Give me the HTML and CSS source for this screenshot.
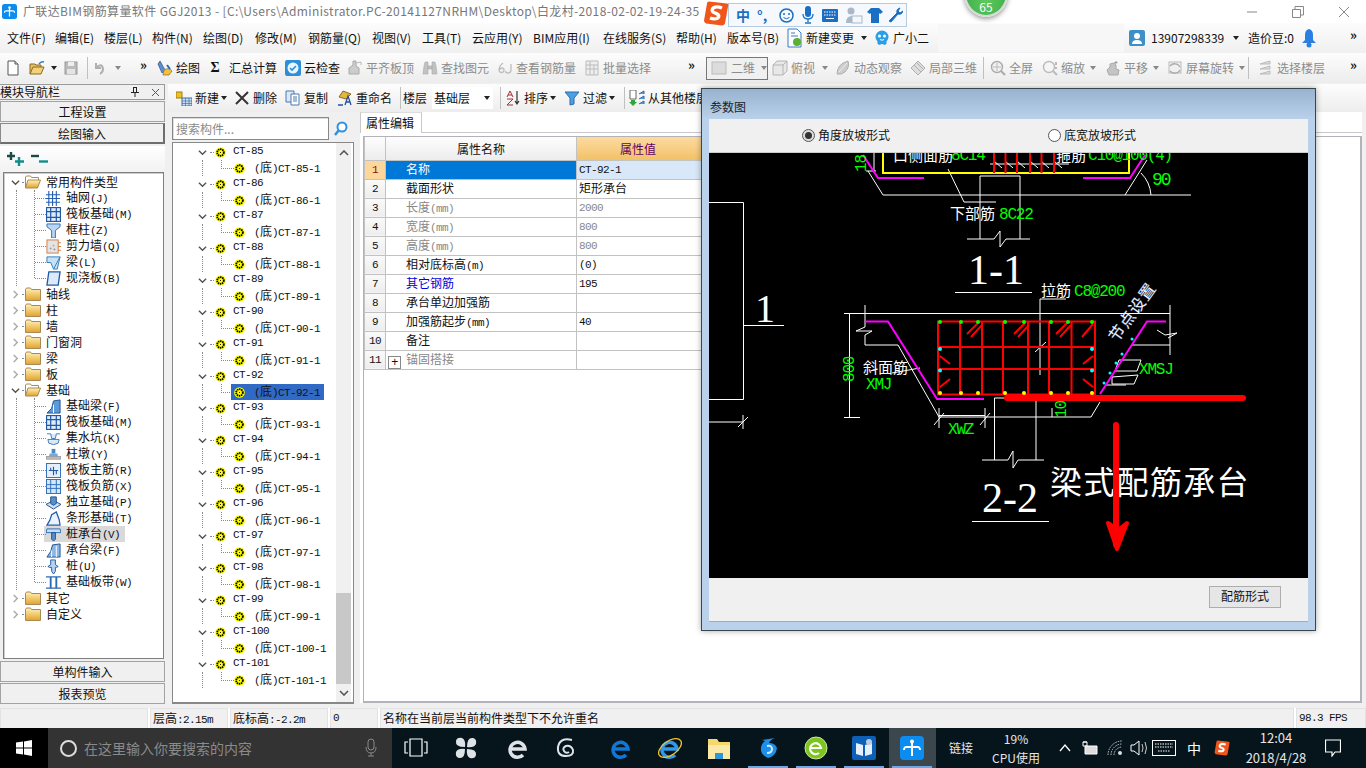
FILE: index.html
```html
<!DOCTYPE html>
<html lang="zh-CN">
<head>
<meta charset="utf-8">
<title>广联达BIM钢筋算量软件 GGJ2013</title>
<link rel="stylesheet" href="styles.css">
</head>
<body>
<svg class="defs" width="0" height="0">
<defs>
<linearGradient id="fy" x1="0" y1="0" x2="0" y2="1"><stop offset="0" stop-color="#fff3b8"/><stop offset="1" stop-color="#e2a12a"/></linearGradient>
<symbol id="folder" viewBox="0 0 16 14"><path d="M.5 2.5 1.5 1h4l1 1.5h9v11H.5z" fill="url(#fy)" stroke="#a88a55"/></symbol>
<symbol id="folderopen" viewBox="0 0 16 14"><path d="M.5 13V2L1.500 1h4l1 1.500h7V5" fill="#fff" stroke="#a88a55"/><path d="M.5 13 3 5h12.500l-3 8z" fill="url(#fy)" stroke="#a88a55"/></symbol>
<symbol id="gear" viewBox="0 0 12 12"><circle cx="6" cy="6" r="5.800" fill="#ff0"/><circle cx="6" cy="6" r="3.600" fill="none" stroke="#000" stroke-width="2" stroke-dasharray="1.600 .7"/><circle cx="6" cy="6" r="1.700" fill="#ff0"/><circle cx="6" cy="6" r=".6" fill="#000"/></symbol>
<symbol id="down" viewBox="0 0 10 6"><path d="M1 1l4 4 4-4" fill="none" stroke="#555" stroke-width="1.600"/></symbol>
<symbol id="right" viewBox="0 0 6 10"><path d="M1 1l4 4-4 4" fill="none" stroke="#aaa" stroke-width="1.600"/></symbol>
<symbol id="t-grid" viewBox="0 0 16 16"><path d="M0 4h15M0 8h15M0 12h15M3 0v16M7 0v16M11 0v16" stroke="#2560b0" stroke-width="1.200" fill="none"/></symbol>
<symbol id="t-raft" viewBox="0 0 16 16"><rect x=".5" y=".5" width="15" height="15" fill="#dfeaf8" stroke="#1f5aa8" stroke-width="1.400"/><path d="M5 1v14M11 1v14M1 5h14M1 11h14" stroke="#1f5aa8" stroke-width="1.300"/></symbol>
<symbol id="t-col" viewBox="0 0 16 16"><path d="M1 1h14v3L10 8v8H6V8L1 4z" fill="#bcd6f2" stroke="#2a6cb8"/></symbol>
<symbol id="t-wall" viewBox="0 0 16 16"><rect x="1" y="1" width="12" height="14" fill="#e4e4e4" stroke="#d27a3c"/><path d="M13 4h3M13 8h3M13 12h3" stroke="#d27a3c"/><circle cx="5" cy="10" r="1" fill="#999"/><circle cx="9" cy="11" r="1" fill="#888"/><circle cx="8" cy="7" r="1" fill="#aaa"/></symbol>
<symbol id="t-beam" viewBox="0 0 16 16"><path d="M1 2h14L12 15H8L5 8H1z" fill="#c8e0f6" stroke="#2a7cc0"/><path d="M8 15l7-13" stroke="#2a7cc0"/></symbol>
<symbol id="t-slab" viewBox="0 0 16 16"><path d="M3 1h12l-2 14H1z" fill="#dbe9fa" stroke="#1f5aa8" stroke-width="1.400"/></symbol>
<symbol id="t-base" viewBox="0 0 16 16"><path d="M1 15l5-5 2-8 7-1v14H1z" fill="#5c9ad8" stroke="#1f4f90"/><path d="M8 15V6" stroke="#fff"/></symbol>
<symbol id="t-sump" viewBox="0 0 16 16"><path d="M1 3h4l1 5h4l1-5h4M3 13q5 3 10 0l1-4H2z" fill="#dce9f5" stroke="#3b78b8"/></symbol>
<symbol id="t-pier" viewBox="0 0 16 16"><rect x="6" y="2" width="4" height="5" fill="#4d8acb"/><path d="M4 7h8l1 3H3z" fill="#7aa6d8"/><rect x="0" y="10" width="16" height="3" fill="#bbb" stroke="#777" stroke-width=".5"/></symbol>
<symbol id="t-mainbar" viewBox="0 0 16 16"><rect x=".5" y=".5" width="15" height="15" fill="#e6eff9" stroke="#2a6cb8"/><path d="M3 8h10M8 4v9M5 5v3M11 8v4" stroke="#1f5aa8" stroke-width="1.200" fill="none"/></symbol>
<symbol id="t-negbar" viewBox="0 0 16 16"><rect x=".5" y=".5" width="15" height="15" fill="#d6e6f7" stroke="#2a6cb8"/><path d="M1 6h14M1 10h14M5 1v14M11 1v14" stroke="#2a6cb8" fill="none"/></symbol>
<symbol id="t-iso" viewBox="0 0 16 16"><path d="M0 10l8-4 8 4-8 5z" fill="#cfe0f4" stroke="#1f4f90"/><path d="M5 2h6v7l-3 2-3-2z" fill="#5a8fca" stroke="#1f4f90"/></symbol>
<symbol id="t-strip" viewBox="0 0 16 16"><path d="M1 15l3-5 2-6 5-3 3 8 1 6z" fill="#eaf2fb" stroke="#1f5aa8" stroke-width="1.300"/></symbol>
<symbol id="t-cap" viewBox="0 0 16 16"><path d="M1 2h14l1 4H0z" fill="#c8dcf2" stroke="#2a6cb8"/><path d="M6 6h4v7l-2 2-2-2z" fill="#5a8fca" stroke="#1f4f90"/></symbol>
<symbol id="t-capbeam" viewBox="0 0 16 16"><path d="M1 15l4-6 2-7 8-1v14z" fill="#8ab6e4" stroke="#1f4f90"/><path d="M6 15V8M11 15V3" stroke="#fff"/></symbol>
<symbol id="t-pile" viewBox="0 0 16 16"><path d="M5 1h5v5l3 2-2 1h-1v4l-2 3-2-3V9H4L2 8l3-2z" fill="#b7d3f0" stroke="#1f5aa8"/></symbol>
<symbol id="t-band" viewBox="0 0 16 16"><path d="M0 2h16M0 14h16" stroke="#2a6cb8" stroke-width="1.500"/><path d="M5 2v12M11 2v12" stroke="#2a6cb8" stroke-width="2"/></symbol>

<symbol id="i-doc" viewBox="0 0 16 16"><path d="M3 1h7l3 3v11H3z" fill="#fff" stroke="#555"/><path d="M10 1v3h3" fill="#ddd" stroke="#555"/></symbol>
<symbol id="i-open" viewBox="0 0 16 16"><path d="M1 14V4h5l1 1h5v2" fill="#e8c064" stroke="#8a6a20"/><path d="M1 14l3-7h11l-3 7z" fill="#f4d078" stroke="#8a6a20"/><path d="M10 4q2-3 5-2" fill="none" stroke="#3a7ac8" stroke-width="1.500"/></symbol>
<symbol id="i-save" viewBox="0 0 16 16"><rect x="2" y="2" width="12" height="12" fill="#bbb" stroke="#999"/><rect x="5" y="2" width="6" height="4" fill="#eee"/><rect x="4" y="9" width="8" height="5" fill="#e4e4e4"/></symbol>
<symbol id="i-undo" viewBox="0 0 16 16"><path d="M5 3v5h5M5 8q6-6 7 1 0 3-3 5" fill="none" stroke="#b0b0b0" stroke-width="2"/></symbol>
<symbol id="i-draw" viewBox="0 0 16 16"><path d="M3 1l5 9-3 3-4-9z" fill="#5f8fd0" stroke="#2a4f8a" stroke-width=".7"/><path d="M7 10q5-3 8 1l-3 4H6z" fill="#f0c040" stroke="#8a6a20" stroke-width=".7"/><path d="M10 5l3 4" stroke="#2a6cb8" stroke-width="2"/></symbol>
<symbol id="i-cloud" viewBox="0 0 16 16"><rect x="0" y="0" width="16" height="16" rx="2" fill="#2e8fd8"/><circle cx="8" cy="8" r="5.500" fill="#eaf6ff"/><path d="M5 8l2 2 4-4" fill="none" stroke="#2e8fd8" stroke-width="1.600"/></symbol>
<symbol id="i-level" viewBox="0 0 16 16"><path d="M2 14V8l4-3V1h3v5l3 2v6z" fill="#ccc" stroke="#aaa"/><path d="M9 3l5-1v3" fill="none" stroke="#bbb"/></symbol>
<symbol id="i-find" viewBox="0 0 16 16"><path d="M2 6l1-4h3v12H1zM10 2h3l1 4 1 8h-5zM6 6h4v3H6z" fill="#c2c2c2" stroke="#aaa" stroke-width=".6"/></symbol>
<symbol id="i-loop" viewBox="0 0 16 16"><path d="M6 3Q2 6 2 10a2.500 2.500 0 0 0 5 0 2 2 0 0 0-4 0M14 4v6q0 3-3 3t-2-2" fill="none" stroke="#bdbdbd" stroke-width="1.300"/></symbol>
<symbol id="i-batch" viewBox="0 0 16 16"><path d="M2 1h12v14H2zM2 5h12M2 9h12M6 1v14M10 5v10" fill="#eee" stroke="#bbb"/></symbol>
<symbol id="i-flat" viewBox="0 0 16 16"><rect x="1" y="2" width="14" height="12" fill="#dcdcdc" stroke="#bbb"/></symbol>
<symbol id="i-cube" viewBox="0 0 16 16"><path d="M1 5l4-4h10v10l-4 4H1zM1 5h10v10M11 5l4-4" fill="#e8e8e8" stroke="#b4b4b4"/></symbol>
<symbol id="i-orbit" viewBox="0 0 16 16"><path d="M2 14Q2 4 13 1q2 6-3 11-4 3-8 2z" fill="#ccc" stroke="#b0b0b0"/><path d="M4 12l8-9" stroke="#eee"/></symbol>
<symbol id="i-local" viewBox="0 0 16 16"><path d="M1 8l7-7 7 7-7 7z" fill="#ddd" stroke="#b0b0b0"/><path d="M4 5l7 7M8 1l-4 4M7 3l6 6" stroke="#b0b0b0" fill="none"/></symbol>
<symbol id="i-full" viewBox="0 0 16 16"><circle cx="7" cy="7" r="5.500" fill="#f0f0f0" stroke="#aaa" stroke-width="1.400"/><path d="M11 11l4 4" stroke="#aaa" stroke-width="2"/><path d="M7 3v8M3 7h8" stroke="#bbb"/></symbol>
<symbol id="i-zoom" viewBox="0 0 16 16"><circle cx="7" cy="7" r="5.500" fill="#f5f5f5" stroke="#bbb" stroke-width="1.400"/><path d="M11 11l4 4M14 2v3M14 7v2" stroke="#bbb" stroke-width="2"/></symbol>
<symbol id="i-pan" viewBox="0 0 16 16"><path d="M4 15l-2-5 3-3V4l4-1 2 2v4l3 1-1 5z" fill="#c4c4c4" stroke="#aaa"/><path d="M11 1v3M9.500 2.500h3" stroke="#999"/></symbol>
<symbol id="i-rot" viewBox="0 0 16 16"><rect x="2" y="2" width="12" height="11" fill="#f0f0f0" stroke="#bbb"/><path d="M3 6a6 6 0 0 1 10 1M13 10a6 6 0 0 1-10 1" fill="none" stroke="#aaa" stroke-width="1.300"/></symbol>
<symbol id="i-floors" viewBox="0 0 16 16"><path d="M2 4l10-3v3zM2 9l10-3v3zM2 14l10-3v3z" fill="#ddd" stroke="#bbb"/></symbol>

<symbol id="s-new" viewBox="0 0 16 16"><rect x="0" y="2" width="6" height="6" fill="#f0c020" stroke="#a07a10"/><rect x="6" y="8" width="10" height="8" fill="#cfe0f4" stroke="#3a6ea8"/><path d="M6 11h10M6 13.500h10M9.500 8v8M13 8v8" stroke="#3a6ea8" stroke-width=".7"/></symbol>
<symbol id="s-del" viewBox="0 0 16 16"><path d="M2 2l12 12M14 2L2 14" stroke="#333" stroke-width="2"/></symbol>
<symbol id="s-copy" viewBox="0 0 16 16"><path d="M1 1h8v11H1z" fill="#dbe8f6" stroke="#4a78b0"/><path d="M6 4h8v11H6z" fill="#fff" stroke="#4a78b0"/><path d="M8 7h4M8 9h4M8 11h4" stroke="#4a78b0"/></symbol>
<symbol id="s-ren" viewBox="0 0 16 16"><path d="M6 1l8 3-5 5-7-2z" fill="#e2b640" stroke="#8a6a20"/><path d="M1 15h5M8 15l3-9 3 9M9 12h4" fill="none" stroke="#2a4f9a" stroke-width="1.300"/></symbol>
<symbol id="s-sort" viewBox="0 0 16 16"><path d="M12 1v13M10 11l2 3 2-3" fill="none" stroke="#333" stroke-width="1.200"/><path d="M2 7l3-6 3 6M3 5h4" fill="none" stroke="#a03030"/><path d="M2 9h6l-6 6h6" fill="none" stroke="#a03030"/></symbol>
<symbol id="s-filter" viewBox="0 0 16 16"><path d="M1 2h14L10 8v6l-4 1V8z" fill="#4aa0e0" stroke="#2a6cb0"/></symbol>
<symbol id="s-from" viewBox="0 0 16 16"><path d="M1 0h6v9H1z" fill="#fff" stroke="#666"/><path d="M2 10h4v2h2l-4 4-4-4h2z" fill="#2ea83a"/><path d="M10 4l5-3v3M10 9l5-3v3M10 14l5-3v3" fill="#5a9ad8" stroke="#2a6cb0"/></symbol>
<symbol id="s-mag" viewBox="0 0 16 16"><circle cx="8" cy="6" r="4.500" fill="#fff" stroke="#2e90e0" stroke-width="2"/><path d="M5 9l-4 5" stroke="#2e90e0" stroke-width="2.500"/></symbol>

<symbol id="m-change" viewBox="0 0 16 20"><path d="M1 1h9l4 4v14H1z" fill="#fff" stroke="#3a7ac8"/><path d="M4 5h4M4 8h7" stroke="#3a7ac8"/><circle cx="10" cy="14" r="4" fill="#5cb030"/></symbol>
<symbol id="m-ai" viewBox="0 0 16 16"><circle cx="8" cy="7" r="6.500" fill="#2a9fe8"/><circle cx="5.500" cy="6" r="1.500" fill="#fff"/><circle cx="10.500" cy="6" r="1.500" fill="#fff"/><path d="M3 13l2-2h6l2 2-2 2-3-1-3 1z" fill="#2a9fe8"/><path d="M6 9.500q2 1.500 4 0" stroke="#fff" fill="none"/></symbol>
<symbol id="m-user" viewBox="0 0 16 16"><rect width="16" height="16" rx="2" fill="#3d8fc8"/><circle cx="8" cy="6" r="3" fill="#fff"/><path d="M3 14q0-4 5-4t5 4z" fill="#fff"/></symbol>
<symbol id="m-bell" viewBox="0 0 16 20"><path d="M8 1q4 1 4 6v5l3 3H1l3-3V7q0-5 4-6z" fill="#2a7fe0"/><circle cx="8" cy="17" r="2.500" fill="#2a7fe0"/></symbol>
<symbol id="app" viewBox="0 0 24 24"><rect width="24" height="24" rx="4" fill="#0d8cf0"/><path d="M12 5v15M4 14c0-4 3-3 4-3h8c1 0 4-1 4 3" fill="none" stroke="#fff" stroke-width="2"/><circle cx="12" cy="5.500" r="2" fill="#fff"/></symbol>
<symbol id="winlogo" viewBox="0 0 16 16"><path d="M0 2.500 7 1.500V7.500H0zM8 1.400 16 0V7.500H8zM0 8.500H7V14.500L0 13.500zM8 8.500H16V16L8 14.600z" fill="#fff"/></symbol>
<symbol id="ie" viewBox="0 0 24 24"><path d="M4 13h15a7.500 7.500 0 1 0-2 6" fill="none" stroke="currentColor" stroke-width="3.500"/></symbol>
<symbol id="sogou" viewBox="0 0 26 26"><path d="M6 1l18 2q2 0 1 3l-3 17q-1 2-3 2L3 23q-2-1-2-3L4 3q0-2 2-2z" fill="#f0561a"/><path d="M19 7.500q-5-2-8-.5-3 2-1 4.500l5 2.500q2 2-1 4-3 1-7-.5" fill="none" stroke="#fff" stroke-width="3.400"/></symbol>
</defs>
</svg>

<div class="app">
  <header class="titlebar">
    <svg class="ic"><use href="#app"/></svg>
    <span class="title-text">广联达BIM钢筋算量软件 GGJ2013 - [C:\Users\Administrator.PC-20141127NRHM\Desktop\白龙村-2018-02-02-19-24-35</span>
    <div class="winbtns">
      <svg width="12" height="12" viewBox="0 0 12 12"><path d="M1 6h10" stroke="#888"/></svg>
      <svg width="12" height="12" viewBox="0 0 12 12"><path d="M.5 3.500h8v8h-8zM3 3V.500h8.500V9H9" fill="none" stroke="#888"/></svg>
      <svg width="12" height="12" viewBox="0 0 12 12"><path d="M1 1l10 10M11 1L1 11" stroke="#888"/></svg>
    </div>
  </header>

  <nav class="menubar">
    <span>文件(F)</span><span>编辑(E)</span><span>楼层(L)</span><span>构件(N)</span><span>绘图(D)</span><span>修改(M)</span><span>钢筋量(Q)</span><span>视图(V)</span><span>工具(T)</span><span>云应用(Y)</span><span>BIM应用(I)</span><span>在线服务(S)</span><span>帮助(H)</span><span>版本号(B)</span>
    <span class="tb"><svg class="ic tall"><use href="#m-change"/></svg>新建变更</span><span class="dd"></span>
    <span class="tb"><svg class="ic"><use href="#m-ai"/></svg>广小二</span>
    <span class="menu-blank"></span><span></span>
    <span class="tb user"><svg class="ic"><use href="#m-user"/></svg>13907298339</span><span class="dd"></span>
    <span>造价豆:0</span>
    <span><svg class="ic tall"><use href="#m-bell"/></svg></span>
    <span class="more">»</span>
  </nav>

  <div class="mainbar">
    <span class="tb"><svg class="ic"><use href="#i-doc"/></svg></span>
    <span class="tb"><svg class="ic"><use href="#i-open"/></svg></span><span class="dd"></span>
    <span class="tb"><svg class="ic"><use href="#i-save"/></svg></span><span class="sep"></span>
    <span class="tb"><svg class="ic"><use href="#i-undo"/></svg></span><span class="dd off"></span>
    <span class="more">»</span>
    <span class="tb"><svg class="ic"><use href="#i-draw"/></svg>绘图</span>
    <span class="tb sigma"><b>Σ</b>汇总计算</span>
    <span class="tb"><svg class="ic"><use href="#i-cloud"/></svg>云检查</span>
    <span class="tb off"><svg class="ic"><use href="#i-level"/></svg>平齐板顶</span>
    <span class="tb off"><svg class="ic"><use href="#i-find"/></svg>查找图元</span>
    <span class="tb off"><svg class="ic"><use href="#i-loop"/></svg>查看钢筋量</span>
    <span class="tb off"><svg class="ic"><use href="#i-batch"/></svg>批量选择</span>
    <span class="more">»</span>
    <span class="combo-2d"><svg class="ic"><use href="#i-flat"/></svg><em>二维</em><i class="dd off"></i></span>
    <span class="tb off"><svg class="ic"><use href="#i-cube"/></svg>俯视</span><span class="dd off"></span>
    <span class="tb off"><svg class="ic"><use href="#i-orbit"/></svg>动态观察</span>
    <span class="tb off"><svg class="ic"><use href="#i-local"/></svg>局部三维</span><span class="sep"></span>
    <span class="tb off"><svg class="ic"><use href="#i-full"/></svg>全屏</span>
    <span class="tb off"><svg class="ic"><use href="#i-zoom"/></svg>缩放</span><span class="dd off"></span>
    <span class="tb off"><svg class="ic"><use href="#i-pan"/></svg>平移</span><span class="dd off"></span>
    <span class="tb off"><svg class="ic"><use href="#i-rot"/></svg>屏幕旋转</span><span class="dd off"></span><span class="sep"></span>
    <span class="tb off"><svg class="ic"><use href="#i-floors"/></svg>选择楼层</span>
    <span class="more">»</span>
  </div>

  <main class="main">
    <aside class="nav">
      <div class="nav-head"><span>模块导航栏</span>
        <svg class="nav-pin" width="8" height="10" viewBox="0 0 8 10"><path d="M2 .5h4M2.500 1v4M5.500 1v4M0 5.500h8M4 6v4" stroke="#222" fill="none"/></svg>
        <svg width="9" height="9" viewBox="0 0 9 9"><path d="M1 1l7 7M8 1L1 8" stroke="#555"/></svg>
      </div>
      <button class="navbtn">工程设置</button>
      <button class="navbtn pressed">绘图输入</button>
      <div class="nav-tools">
        <svg width="17" height="14" viewBox="0 0 17 14"><path d="M4 0v8M0 4h8" stroke="#1a4a44" stroke-width="2.400"/><path d="M12 5v9M8 9.500h9" stroke="#0e8f8a" stroke-width="2.400"/></svg>
        <svg width="17" height="14" viewBox="0 0 17 14"><path d="M0 4h8" stroke="#1a4a44" stroke-width="2.400"/><path d="M8 9.500h9" stroke="#0e8f8a" stroke-width="2.400"/></svg>
      </div>
      <div class="nav-tree m">
        <div class="n-row"><svg class="chev"><use href="#down"/></svg><svg class="fold"><use href="#folderopen"/></svg><i>常用构件类型</i></div>
        <div class="kids"><div class="kidlist">
          <div class="k-row"><svg class="ic"><use href="#t-grid"/></svg><span><i>轴网</i>(J)</span></div>
          <div class="k-row"><svg class="ic"><use href="#t-raft"/></svg><span><i>筏板基础</i>(M)</span></div>
          <div class="k-row"><svg class="ic"><use href="#t-col"/></svg><span><i>框柱</i>(Z)</span></div>
          <div class="k-row"><svg class="ic"><use href="#t-wall"/></svg><span><i>剪力墙</i>(Q)</span></div>
          <div class="k-row"><svg class="ic"><use href="#t-beam"/></svg><span><i>梁</i>(L)</span></div>
          <div class="k-row"><svg class="ic"><use href="#t-slab"/></svg><span><i>现浇板</i>(B)</span></div>
        </div></div>
        <div class="n-row"><svg class="chev"><use href="#right"/></svg><svg class="fold"><use href="#folder"/></svg><i>轴线</i></div>
        <div class="n-row"><svg class="chev"><use href="#right"/></svg><svg class="fold"><use href="#folder"/></svg><i>柱</i></div>
        <div class="n-row"><svg class="chev"><use href="#right"/></svg><svg class="fold"><use href="#folder"/></svg><i>墙</i></div>
        <div class="n-row"><svg class="chev"><use href="#right"/></svg><svg class="fold"><use href="#folder"/></svg><i>门窗洞</i></div>
        <div class="n-row"><svg class="chev"><use href="#right"/></svg><svg class="fold"><use href="#folder"/></svg><i>梁</i></div>
        <div class="n-row"><svg class="chev"><use href="#right"/></svg><svg class="fold"><use href="#folder"/></svg><i>板</i></div>
        <div class="n-row"><svg class="chev"><use href="#down"/></svg><svg class="fold"><use href="#folderopen"/></svg><i>基础</i></div>
        <div class="kids"><div class="kidlist">
          <div class="k-row"><svg class="ic"><use href="#t-base"/></svg><span><i>基础梁</i>(F)</span></div>
          <div class="k-row"><svg class="ic"><use href="#t-raft"/></svg><span><i>筏板基础</i>(M)</span></div>
          <div class="k-row"><svg class="ic"><use href="#t-sump"/></svg><span><i>集水坑</i>(K)</span></div>
          <div class="k-row"><svg class="ic"><use href="#t-pier"/></svg><span><i>柱墩</i>(Y)</span></div>
          <div class="k-row"><svg class="ic"><use href="#t-mainbar"/></svg><span><i>筏板主筋</i>(R)</span></div>
          <div class="k-row"><svg class="ic"><use href="#t-negbar"/></svg><span><i>筏板负筋</i>(X)</span></div>
          <div class="k-row"><svg class="ic"><use href="#t-iso"/></svg><span><i>独立基础</i>(P)</span></div>
          <div class="k-row"><svg class="ic"><use href="#t-strip"/></svg><span><i>条形基础</i>(T)</span></div>
          <div class="k-row active"><svg class="ic"><use href="#t-cap"/></svg><span><i>桩承台</i>(V)</span></div>
          <div class="k-row"><svg class="ic"><use href="#t-capbeam"/></svg><span><i>承台梁</i>(F)</span></div>
          <div class="k-row"><svg class="ic"><use href="#t-pile"/></svg><span><i>桩</i>(U)</span></div>
          <div class="k-row"><svg class="ic"><use href="#t-band"/></svg><span><i>基础板带</i>(W)</span></div>
        </div></div>
        <div class="n-row"><svg class="chev"><use href="#right"/></svg><svg class="fold"><use href="#folder"/></svg><i>其它</i></div>
        <div class="n-row"><svg class="chev"><use href="#right"/></svg><svg class="fold"><use href="#folder"/></svg><i>自定义</i></div>
      </div>
      <button class="navbtn low">单构件输入</button>
      <button class="navbtn">报表预览</button>
    </aside>

    <section class="work">
      <div class="subbar">
        <span class="tb"><svg class="ic"><use href="#s-new"/></svg>新建</span><span class="dd"></span>
        <span class="tb"><svg class="ic"><use href="#s-del"/></svg>删除</span>
        <span class="tb"><svg class="ic"><use href="#s-copy"/></svg>复制</span>
        <span class="tb"><svg class="ic"><use href="#s-ren"/></svg>重命名</span><span class="sep"></span>
        <span class="tb">楼层</span>
        <span class="combo"><em>基础层</em><i class="dd"></i></span><span class="sep"></span>
        <span class="tb"><svg class="ic"><use href="#s-sort"/></svg>排序</span><span class="dd"></span>
        <span class="tb"><svg class="ic"><use href="#s-filter"/></svg>过滤</span><span class="dd"></span><span class="sep"></span>
        <span class="tb"><svg class="ic"><use href="#s-from"/></svg>从其他楼层</span>
      </div>
      <div class="work-body">
        <div class="list">
          <div class="search"><div class="search-box">搜索构件...</div><svg class="ic"><use href="#s-mag"/></svg></div>
          <div class="ct-tree m">
            <div class="ct-rows">
              <div class="g-row"><svg class="chev"><use href="#down"/></svg><svg class="gr"><use href="#gear"/></svg>CT-85</div><div class="c-row"><span class="sel"><svg class="gr"><use href="#gear"/></svg><b>(<i>底</i>)CT-85-1</b></span></div>
              <div class="g-row"><svg class="chev"><use href="#down"/></svg><svg class="gr"><use href="#gear"/></svg>CT-86</div><div class="c-row"><span class="sel"><svg class="gr"><use href="#gear"/></svg><b>(<i>底</i>)CT-86-1</b></span></div>
              <div class="g-row"><svg class="chev"><use href="#down"/></svg><svg class="gr"><use href="#gear"/></svg>CT-87</div><div class="c-row"><span class="sel"><svg class="gr"><use href="#gear"/></svg><b>(<i>底</i>)CT-87-1</b></span></div>
              <div class="g-row"><svg class="chev"><use href="#down"/></svg><svg class="gr"><use href="#gear"/></svg>CT-88</div><div class="c-row"><span class="sel"><svg class="gr"><use href="#gear"/></svg><b>(<i>底</i>)CT-88-1</b></span></div>
              <div class="g-row"><svg class="chev"><use href="#down"/></svg><svg class="gr"><use href="#gear"/></svg>CT-89</div><div class="c-row"><span class="sel"><svg class="gr"><use href="#gear"/></svg><b>(<i>底</i>)CT-89-1</b></span></div>
              <div class="g-row"><svg class="chev"><use href="#down"/></svg><svg class="gr"><use href="#gear"/></svg>CT-90</div><div class="c-row"><span class="sel"><svg class="gr"><use href="#gear"/></svg><b>(<i>底</i>)CT-90-1</b></span></div>
              <div class="g-row"><svg class="chev"><use href="#down"/></svg><svg class="gr"><use href="#gear"/></svg>CT-91</div><div class="c-row"><span class="sel"><svg class="gr"><use href="#gear"/></svg><b>(<i>底</i>)CT-91-1</b></span></div>
              <div class="g-row"><svg class="chev"><use href="#down"/></svg><svg class="gr"><use href="#gear"/></svg>CT-92</div><div class="c-row on"><span class="sel"><svg class="gr"><use href="#gear"/></svg><b>(<i>底</i>)CT-92-1</b></span></div>
              <div class="g-row"><svg class="chev"><use href="#down"/></svg><svg class="gr"><use href="#gear"/></svg>CT-93</div><div class="c-row"><span class="sel"><svg class="gr"><use href="#gear"/></svg><b>(<i>底</i>)CT-93-1</b></span></div>
              <div class="g-row"><svg class="chev"><use href="#down"/></svg><svg class="gr"><use href="#gear"/></svg>CT-94</div><div class="c-row"><span class="sel"><svg class="gr"><use href="#gear"/></svg><b>(<i>底</i>)CT-94-1</b></span></div>
              <div class="g-row"><svg class="chev"><use href="#down"/></svg><svg class="gr"><use href="#gear"/></svg>CT-95</div><div class="c-row"><span class="sel"><svg class="gr"><use href="#gear"/></svg><b>(<i>底</i>)CT-95-1</b></span></div>
              <div class="g-row"><svg class="chev"><use href="#down"/></svg><svg class="gr"><use href="#gear"/></svg>CT-96</div><div class="c-row"><span class="sel"><svg class="gr"><use href="#gear"/></svg><b>(<i>底</i>)CT-96-1</b></span></div>
              <div class="g-row"><svg class="chev"><use href="#down"/></svg><svg class="gr"><use href="#gear"/></svg>CT-97</div><div class="c-row"><span class="sel"><svg class="gr"><use href="#gear"/></svg><b>(<i>底</i>)CT-97-1</b></span></div>
              <div class="g-row"><svg class="chev"><use href="#down"/></svg><svg class="gr"><use href="#gear"/></svg>CT-98</div><div class="c-row"><span class="sel"><svg class="gr"><use href="#gear"/></svg><b>(<i>底</i>)CT-98-1</b></span></div>
              <div class="g-row"><svg class="chev"><use href="#down"/></svg><svg class="gr"><use href="#gear"/></svg>CT-99</div><div class="c-row"><span class="sel"><svg class="gr"><use href="#gear"/></svg><b>(<i>底</i>)CT-99-1</b></span></div>
              <div class="g-row"><svg class="chev"><use href="#down"/></svg><svg class="gr"><use href="#gear"/></svg>CT-100</div><div class="c-row"><span class="sel"><svg class="gr"><use href="#gear"/></svg><b>(<i>底</i>)CT-100-1</b></span></div>
              <div class="g-row"><svg class="chev"><use href="#down"/></svg><svg class="gr"><use href="#gear"/></svg>CT-101</div><div class="c-row"><span class="sel"><svg class="gr"><use href="#gear"/></svg><b>(<i>底</i>)CT-101-1</b></span></div>
            </div>
            <div class="vscroll">
              <svg width="10" height="6" viewBox="0 0 10 6"><path d="M1 5l4-4 4 4" fill="none" stroke="#555" stroke-width="1.600"/></svg>
              <div class="thumb"></div>
              <svg width="10" height="6" viewBox="0 0 10 6"><use href="#down"/></svg>
            </div>
          </div>
        </div>
        <div class="props">
          <div class="tabs"><span class="tab">属性编辑</span></div>
          <div class="grid-wrap">
            <table class="attrs m">
              <colgroup><col class="c-n"><col class="c-name"><col></colgroup>
              <thead><tr><th></th><th>属性名称</th><th class="vh">属性值</th></tr></thead>
              <tbody>
                <tr class="cur"><td class="no">1</td><td class="nm"><i>名称</i></td><td class="val">CT-92-1</td></tr>
                <tr><td class="no">2</td><td class="nm"><i>截面形状</i></td><td class="val"><i>矩形承台</i></td></tr>
                <tr class="dis"><td class="no">3</td><td class="nm"><i>长度</i>(mm)</td><td class="val">2000</td></tr>
                <tr class="dis"><td class="no">4</td><td class="nm"><i>宽度</i>(mm)</td><td class="val">800</td></tr>
                <tr class="dis"><td class="no">5</td><td class="nm"><i>高度</i>(mm)</td><td class="val">800</td></tr>
                <tr><td class="no">6</td><td class="nm"><i>相对底标高</i>(m)</td><td class="val">(0)</td></tr>
                <tr><td class="no">7</td><td class="nm link"><i>其它钢筋</i></td><td class="val">195</td></tr>
                <tr><td class="no">8</td><td class="nm"><i>承台单边加强筋</i></td><td class="val"></td></tr>
                <tr><td class="no">9</td><td class="nm"><i>加强筋起步</i>(mm)</td><td class="val">40</td></tr>
                <tr><td class="no">10</td><td class="nm"><i>备注</i></td><td class="val"></td></tr>
                <tr><td class="no">11</td><td class="nm grey"><span class="plus">+</span><i>锚固搭接</i></td><td class="val"></td></tr>
              </tbody>
            </table>
          </div>
        </div>
      </div>
    </section>
  </main>

  <footer class="status m">
    <span></span><span><i>层高</i>:2.15m</span><span><i>底标高</i>:-2.2m</span><span>0</span><span class="msg"><i>名称在当前层当前构件类型下不允许重名</i></span><span>98.3 FPS</span>
  </footer>

  <div class="taskbar">
    <div class="start"><svg width="16" height="16"><use href="#winlogo"/></svg></div>
    <div class="tsearch">
      <span class="cortana"></span><span class="tsearch-text">在这里输入你要搜索的内容</span>
      <svg class="mic" width="12" height="20" viewBox="0 0 12 20"><rect x="3" y="1" width="6" height="11" rx="3" fill="none" stroke="#8a8a8a"/><path d="M1 9q0 6 5 6t5-6M6 15v3M3 18h6" fill="none" stroke="#8a8a8a"/></svg>
    </div>
    <div class="tasks">
      <span class="tc"><svg width="24" height="24" viewBox="0 0 24 24"><path d="M6 3h12v17H6zM4 6H1v11h3M20 6h3v11h-3" fill="none" stroke="#fff" stroke-width="1.200"/></svg></span>
      <span class="tc"><svg width="24" height="24" viewBox="0 0 24 24"><path d="M11 11Q1 11 2 5q1-4 6-3 4 2 3 9zM13 11q0-10 6-9 4 1 3 6-2 4-9 3zM13 13q10 0 9 6-1 4-6 3-4-2-3-9zM11 13q0 10-6 9-4-1-3-6 2-4 9-3z" fill="#dde3e6"/></svg></span>
      <span class="tc ce"><svg width="24" height="24"><use href="#ie"/></svg></span>
      <span class="tc"><svg width="24" height="24" viewBox="0 0 24 24"><path d="M18 4Q6 1 4 11q-1 9 8 9 8 0 7-6-2-5-7-4-4 2-2 5t5 1" fill="none" stroke="#dde3e6" stroke-width="2"/></svg></span>
      <span class="tc edge"><svg width="24" height="24"><use href="#ie"/></svg></span>
      <span class="tc ie"><svg width="24" height="24"><use href="#ie"/><ellipse cx="12" cy="12" rx="13" ry="7" transform="rotate(-35 12 12)" fill="none" stroke="#f2c530" stroke-width="1.300"/></svg></span>
      <span class="tc"><svg width="24" height="24" viewBox="0 0 24 24"><path d="M1 3h9l2 3h11v17H1z" fill="#f5d76e"/><path d="M1 9h22v14H1z" fill="#fbe9a7"/><path d="M8 23v-6h8v6z" fill="#2f97d8"/></svg></span>
      <span class="tc run"><svg width="24" height="24" viewBox="0 0 24 24"><path d="M6 4l13-2q-5 2-6 5 6 0 8 5-1 8-9 10-8-3-7-11 1-4 4-6z" fill="#1e8fe8"/><path d="M11 10q5-1 5 3t-5 4" fill="none" stroke="#cfe9ff" stroke-width="2"/></svg></span>
      <span class="tc run"><svg width="24" height="24" viewBox="0 0 24 24"><circle cx="12" cy="12" r="11" fill="#7cc520" stroke="#cde9a0"/><path d="M6 12h11a5.500 5.500 0 1 0-2 5" fill="none" stroke="#fff" stroke-width="2.200"/></svg></span>
      <span class="tc run"><svg width="24" height="24" viewBox="0 0 24 24"><rect width="24" height="24" rx="2" fill="#0c60b8"/><path d="M4 7l7 2v11l-7-2zM20 7l-7 2v11l7-2z" fill="#e6f0fa"/><circle cx="17" cy="6" r="3" fill="#bcd" /></svg></span>
      <span class="tc run cur-app"><svg width="24" height="24"><use href="#app"/></svg></span>
      <span class="tray-text">链接</span>
      <span class="tray-cpu"><span>19%</span><span>CPU使用</span></span>
      <span class="tc"><svg width="12" height="8" viewBox="0 0 12 8"><path d="M1 7l5-6 5 6" fill="none" stroke="#fff" stroke-width="1.300"/></svg></span>
      <span class="tc"><svg width="16" height="14" viewBox="0 0 16 14"><path d="M3 5h12v8H3z" fill="#ddd" stroke="#fff"/><path d="M1 1h4v4H1zM2 0v2M4 0v2" stroke="#fff" fill="none"/></svg></span>
      <span class="tc"><svg width="16" height="16" viewBox="0 0 16 16"><path d="M1 15A14 14 0 0 1 15 1M4 15A11 11 0 0 1 15 4M7 15a8 8 0 0 1 8-8" fill="none" stroke="#ccc" stroke-dasharray="1.500 1"/><circle cx="13" cy="13" r="2" fill="#ddd"/></svg></span>
      <span class="tc"><svg width="18" height="16" viewBox="0 0 18 16"><path d="M1 5h3l5-4v14l-5-4H1z" fill="none" stroke="#fff"/><path d="M12 4q2 4 0 8M15 2q3 6 0 12" fill="none" stroke="#ccc"/></svg></span>
      <span class="tc"><svg width="24" height="16" viewBox="0 0 24 16"><rect x=".5" y=".5" width="23" height="15" fill="none" stroke="#fff"/><path d="M3 4h18M3 7h18M6 11h12" stroke="#fff" stroke-dasharray="1.500 1"/></svg></span>
      <span class="tray-text zh">中</span>
      <span class="tc"><svg width="16" height="18"><use href="#sogou"/></svg></span>
      <span class="clock"><span>12:04</span><span>2018/4/28</span></span>
      <span class="tc"><svg width="16" height="18" viewBox="0 0 16 18"><path d="M.5 1h15v12H10l-3 4v-4H.5z" fill="none" stroke="#fff" stroke-width="1.200"/></svg></span>
    </div>
  </div>

  <div class="ball"><span>65</span></div>
  <div class="ime">
    <svg class="ime-logo" width="26" height="27"><use href="#sogou"/></svg>
    <div class="ime-bar">
      <b>中</b><b>°,</b>
      <svg width="15" height="15" viewBox="0 0 15 15"><circle cx="7.500" cy="7.500" r="6.500" fill="none" stroke="#1a6fc4" stroke-width="1.500"/><circle cx="5" cy="6" r="1" fill="#1a6fc4"/><circle cx="10" cy="6" r="1" fill="#1a6fc4"/><path d="M4.500 9.500q3 2.500 6 0" fill="none" stroke="#1a6fc4"/></svg>
      <svg width="12" height="18" viewBox="0 0 12 18"><rect x="3" y="0" width="6" height="11" rx="3" fill="#1a6fc4"/><path d="M1 8q0 5 5 5t5-5M6 13v3M3 17h6" fill="none" stroke="#1a6fc4" stroke-width="1.300"/></svg>
      <svg width="16" height="13" viewBox="0 0 16 13"><rect width="16" height="13" rx="1" fill="#1a6fc4"/><path d="M2 3h12M2 6h12" stroke="#fff" stroke-dasharray="1.500 1"/><path d="M4 9.500h8" stroke="#fff"/></svg>
      <svg width="18" height="17" viewBox="0 0 18 17"><circle cx="6" cy="4" r="3.500" fill="#a8b8c8"/><path d="M1 16q0-7 6-7l2 7z" fill="#a8b8c8"/><rect x="7" y="9" width="10" height="7" fill="#f3f6fa" stroke="#a8b8c8"/></svg>
      <svg width="16" height="15" viewBox="0 0 16 15"><path d="M4 0h8l4 4-3 2-1-1v10H4V5L3 6 0 4z" fill="#1a6fc4"/></svg>
      <svg width="15" height="16" viewBox="0 0 15 16"><path d="M1 14L9 6q-1-4 3-5l-2 3 2 2 3-2q-1 4-5 3l-7 8z" fill="#1a6fc4" stroke="#1a6fc4"/></svg>
    </div>
  </div>

  <div class="dialog">
    <div class="dlg-title">参数图</div>
    <div class="dlg-radios">
      <label class="rad"><span class="dot on"></span>角度放坡形式</label>
      <label class="rad"><span class="dot"></span>底宽放坡形式</label>
    </div>
    <svg class="cad" width="599" height="425" viewBox="709 153 599 425">
      <rect x="709" y="153" width="599" height="425" fill="#000"/>
      <g class="w">
        <path d="M709 202.500h34.500v197H709M709 422h34M738 427l10-10M743 415v14"/>
        <path d="M868 171l15 24h308M1125 195l22-35M874 153v18M866 171h10M1141 173q9 9 10 22"/>
        <path d="M990 164h79M994 161l8 7M1005 161l8 7M1017 161l8 7M1030 161l8 7M1041 161l8 7M1054 161l8 7"/>
        <path d="M980 239v-63h40v63M967 239h27l6-8v16l6-8h24"/>
        <path d="M948 169l16 33h32"/>
        <path d="M955 292.500h77M744 325.500h40M972 521.500h77"/>
        <path d="M1040 375V299h26M1035 352l11-10M865 305v22M1170 305v50M844 313.500h326M849.500 313v104M844 417.500h16"/>
        <path d="M865 327l-9 4 16 0-7 4v10h33l41 72h152l9-15M892 373l28-5"/>
        <path d="M1157 330l8 5 12-2-9 5M1132 345l38 0"/>
        <path d="M1119 360h22l-4 11h-22zM1112 377l26-2-4 9h-22zM1106 385h20"/>
        <path d="M939 415.500h46M939 408v20M985 408v20M934 425l10-12M980 425l10-12"/>
        <path d="M994.500 460V398h41.500v62M982 460h26l5-9v17l5-8h26M1052 408v9"/>
      </g>
      <g class="mg">
        <path d="M863 155l15 23h46M1083 178h47l15-23"/>
        <path d="M866 321.500h22l49 77.500h47M1100 394l47-72.500h19"/>
      </g>
      <path class="yl" d="M883 153v20h246v-20"/>
      <g class="rd">
        <path d="M994 153v20M1005.500 153v20M1017 153v20M1030 153v20M1041.500 153v20M1054 153v20"/>
        <path d="M938 321.500h157v73H938zM960 321v74M982 321v74M1003 321v74M1028 321v74M1049 321v74M1071.500 321v74M938 347h157M938 369h157"/>
        <path d="M967 334l11-11M971 337l11-12M1014 334l11-11M1018 337l11-12M1056 334l11-11M1060 337l11-12M1082 337l11-13"/>
        <path d="M940 356l10 8M950 379l-10 8M1093 356l-10 8M1083 379l10 8"/>
      </g>
      <g class="gn-d"><circle cx="940" cy="322" r="2"/><circle cx="961" cy="322" r="2"/><circle cx="978" cy="322" r="2"/><circle cx="1005" cy="322" r="2"/><circle cx="1024" cy="322" r="2"/><circle cx="1051" cy="322" r="2"/><circle cx="1068" cy="322" r="2"/><circle cx="1092" cy="322" r="2"/></g>
      <g class="yl-d"><circle cx="940" cy="393" r="2"/><circle cx="961" cy="393" r="2"/><circle cx="978" cy="393" r="2"/><circle cx="1005" cy="393" r="2"/><circle cx="1024" cy="393" r="2"/><circle cx="1051" cy="393" r="2"/><circle cx="1068" cy="393" r="2"/><circle cx="1092" cy="393" r="2"/></g>
      <g class="cy-d"><circle cx="940" cy="349" r="2"/><circle cx="1092" cy="349" r="2"/><circle cx="940" cy="370.500" r="2"/><circle cx="1092" cy="370.500" r="2"/><circle cx="1122" cy="354" r="1.500"/><circle cx="1116" cy="363" r="1.500"/><circle cx="1110" cy="373" r="1.500"/><circle cx="1104" cy="383" r="1.500"/><circle cx="1132" cy="339" r="1.500"/></g>
      <text class="tw" x="893" y="161">口侧面筋</text><text class="tg" x="951" y="160">8C14</text>
      <text class="tw" x="1056" y="161">箍筋</text><text class="tg" x="1088" y="160">C10@100(4)</text>
      <text class="tg g2" x="1152" y="185">90</text>
      <text class="tg" transform="translate(866 172) rotate(-90)">18</text>
      <text class="tw" x="950" y="219">下部筋</text><text class="tg" x="999" y="219">8C22</text>
      <text class="ts" x="968" y="284">1-1</text>
      <text class="ts s1" x="755" y="322">1</text>
      <text class="tw" x="1041" y="296">拉筋</text><text class="tg" x="1074" y="296">C8@200</text>
      <text class="tw tilt" transform="translate(1117 343) rotate(-54)">节点设置</text>
      <text class="tg" transform="translate(854 382) rotate(-90)">800</text>
      <text class="tw" x="863" y="373">斜面筋</text>
      <text class="tg n" x="866" y="389">XMJ</text>
      <text class="tg n" x="1139" y="374">XMSJ</text>
      <text class="tg n" x="948" y="434">XWZ</text>
      <text class="tg" transform="translate(1066 418) rotate(-90)">10</text>
      <text class="ts" x="982" y="512">2-2</text>
      <text class="big" x="1050" y="494">梁式配筋承台</text>
      <path class="mark" d="M1007 398h236"/>
      <path class="mark" d="M1116 425v120"/>
      <path class="mark-h" d="M1108 523l9 26 10-26-9 7z"/>
    </svg>
    <div class="dlg-foot"><button class="dlg-btn">配筋形式</button></div>
  </div>
</div>
</body>
</html>
```
FILE: styles.css
```css
*{box-sizing:border-box}
html,body{margin:0;padding:0;height:768px;overflow:hidden}
body{font:12px/1.2 "Noto Sans CJK SC","Liberation Sans",sans-serif;color:#111;background:#f0f0f0}
.defs{position:absolute}
.app{position:relative;width:1366px;height:768px;display:flex;flex-direction:column;overflow:hidden}
i,em{font-style:normal}
.ic{width:16px;height:16px;flex:none;display:block}
.ic.tall{height:20px}
button{font:inherit;color:inherit;padding:0;margin:0}

/* mono body with 12px CJK inside */
.m{font-family:"Liberation Mono","Noto Sans CJK SC",monospace;font-size:11px;letter-spacing:-.6px}
.m i{font-family:"Noto Sans CJK SC",sans-serif;font-size:12px;letter-spacing:0}

.titlebar{height:23px;flex:none;background:#fff;display:flex;align-items:center;padding-left:2px;color:#777}
.titlebar .ic{width:15px;height:15px;margin-right:6px}
.title-text{white-space:nowrap;letter-spacing:.37px}
.winbtns{margin-left:auto;display:grid;grid-template-columns:46px 46px 30px;width:122px;margin-right:-2px}

.menubar,.mainbar,.subbar{display:grid;align-items:center;white-space:nowrap}
.tb{display:flex;align-items:center;gap:3px;white-space:nowrap}
.dd{display:flex;align-items:center;padding-left:2px;height:100%}
.dd::before{content:"";border:3px solid transparent;border-top:4px solid #222;border-bottom:0}
.dd.off::before{border-top-color:#888}
.sep{width:1px;height:22px;background:#c0c0c0;margin-left:2px}
.more{font-weight:700;font-size:13px;line-height:1;margin-top:-8px}
.off{color:#8c8c8c}

.menubar{height:30px;flex:none;padding-left:7px;background:linear-gradient(#fcfcfc,#f0f0f0);
grid-template-columns:48px 49px 48px 51px 52px 53px 64px 50px 50px 61px 70px 73px 51px 60px 72px 15px 64px 186px 5px 102px 17px 53px 49px 16px}
.menubar .tb:first-of-type .ic{margin-right:1px}
.menu-blank{height:28px;background:#f7f7f7}
.user{gap:6px}

.mainbar{height:30px;flex:none;padding-left:5px;background:linear-gradient(#fdfdfd,#ececec);
grid-template-columns:24px 20px 14px 22px 6px 22px 27px 17px 50px 78px 62px 75px 75px 87px 104px 18px 66px 48px 15px 75px 71px 9px 52px 46px 17px 46px 16px 70px 9px 12px 92px 16px}
.sigma{gap:6px}
.sigma b{font:700 14px "Liberation Serif",serif;width:16px;text-align:center}
.combo-2d{display:flex;align-items:center;gap:4px;width:62px;height:23px;border:1px solid #777;background:#f0f0f0;padding-left:4px;color:#8c8c8c}
.combo-2d .dd{margin-left:auto;padding-right:3px;width:auto}

.main{flex:1;display:flex;padding-top:1px;min-height:0}
.nav{width:166px;flex:none;display:flex;flex-direction:column;padding-right:1px}
.nav-head{height:16px;display:flex;align-items:center;background:#f0f0f0;border:1px solid #999;border-left:0;padding-right:4px;color:#111}
.nav-pin{margin-left:auto;margin-right:12px}
.navbtn{height:21px;flex:none;background:#f0f0f0;border:1px solid #a3a3a3;margin-top:1px;text-align:center;line-height:19px}
.navbtn.pressed{border-color:#8a8a8a #6e6e6e #6e6e6e #8a8a8a;border-width:1px 2px 2px 1px}
.nav-tools{height:26px;flex:none;margin-top:2px;background:linear-gradient(#fff,#f2f2f2);display:flex;align-items:center;gap:7px;padding-left:7px}
.nav-tree{margin-left:3px;margin-right:1px;height:487px;flex:none;background:#fff;border:1px solid #7f7f7f;box-shadow:inset 1px 1px 0 #ccc;padding-top:1px}
.low{margin-top:2px}
.n-row{height:16px;display:flex;align-items:center;position:relative;padding-left:7px}
.chev{width:9px;height:9px;flex:none;margin-right:6px}
.n-row .chev{margin-right:5px}
.fold{width:16px;height:14px;flex:none;margin-right:5px}
.n-row::after{content:"";position:absolute;left:18px;top:8px;width:4px;border-top:1px dotted #888}
.kids{margin-left:12px;border-left:1px dotted #888}
.kidlist{margin-left:17px;border-left:1px dotted #888}
.k-row{height:16px;display:flex;align-items:center;position:relative;padding-left:11px;gap:5px;white-space:nowrap}
.k-row::before{content:"";width:11px;border-top:1px dotted #888;position:absolute;left:0;top:8px}
.k-row .ic{width:15px;height:15px;position:relative}
.k-row.active{background:linear-gradient(90deg,transparent 9px,#d9d9d9 9px,#d9d9d9 90px,transparent 90px)}
.kidlist .k-row:last-child::after{content:"";position:absolute;left:-1px;top:9px;width:1px;height:8px;background:#fff}

.work{flex:1;min-width:0;display:flex;flex-direction:column}
.subbar{height:28px;flex:none;margin-left:2px;padding-left:8px;background:linear-gradient(#fdfdfd,#ededed);
grid-template-columns:43px 15px 51px 52px 61px 5px 29px 66px 7px 43px 16px 43px 15px 7px 200px}
.combo{display:flex;align-items:center;width:61px;height:22px;background:#fff;padding-left:2px}
.combo .dd{margin-left:auto;padding-right:3px;width:auto}
.work-body{flex:1;display:flex;min-height:0;background:#f0f0f0}
.list{width:194px;flex:none;display:flex;flex-direction:column;padding:5px 0 4px 6px}
.search{display:flex;align-items:center;height:23px;flex:none;gap:5px}
.search-box{width:157px;height:23px;border:1px solid #888;background:#fff;color:#8a8a8a;padding-left:3px;line-height:21px;font-size:12px;box-shadow:inset 1px 1px 0 #ddd}
.ct-tree{margin-top:2px;width:182px;flex:1;background:#fff;border:1px solid #888;border-bottom:2px solid #888;display:flex;min-height:0}
.ct-rows{flex:1;min-width:0;padding-top:1px}
.g-row{height:16px;display:flex;align-items:center;position:relative;padding-left:25px;white-space:nowrap}
.g-row .chev{margin-right:8px}
.g-row::after{content:"";position:absolute;left:37px;top:8px;width:4px;border-top:1px dotted #888}
.gr{width:11px;height:11px;flex:none;margin-right:7px}
.c-row{height:16px;position:relative;padding-left:58px;display:flex;white-space:nowrap}
.c-row::before{content:"";position:absolute;left:29px;top:0;height:16px;border-left:1px dotted #888}
.c-row::after{content:"";position:absolute;left:48px;top:0;height:8px;width:12px;border-left:1px dotted #888;border-bottom:1px dotted #888}
.sel{display:flex;align-items:center;height:16px;padding:0 3px 0 3px;position:relative;z-index:1;min-width:93px}
.sel .gr{margin-right:9px}
.sel b{font-weight:400}
.c-row.on .sel{background:#316ac5}
.vscroll{width:15px;flex:none;margin-right:2px;background:#f0f0f0;display:flex;flex-direction:column;align-items:center;padding:7px 0 6px}
.thumb{width:15px;height:91px;background:#c8c8c8;margin-top:auto;margin-bottom:6px}

.props{flex:1;min-width:0;background:#fff;margin:0 4px 5px 0;display:flex;flex-direction:column;position:relative}
.tabs{height:21px;flex:none;display:flex;border-bottom:1px solid #c8c8c8;background:#fff}
.tab{width:62px;height:21px;background:#fff;border:1px solid #c8c8c8;border-bottom:0;border-top-color:#ddd;padding-left:5px;line-height:19px;font-size:12px}
.grid-wrap{margin:3px 0 0 3px;flex:1;border:2px solid #b2b2ba;border-width:1px 2px 2px 1px;overflow:hidden}
.attrs{border-collapse:collapse;table-layout:fixed;width:880px}
.c-n{width:21px}.c-name{width:191px}
.attrs th{height:23px;font:400 12px "Noto Sans CJK SC",sans-serif;letter-spacing:0;background:linear-gradient(#fdfdfd,#ececec);border:1px solid #c2c2c2;border-top:0;padding:0;text-align:center}
.attrs th.vh{background:linear-gradient(#fcdb9f,#f2c168);color:#660066;text-align:left;padding-left:43px}
.attrs td{height:19px;padding:0;border:1px solid #c2c2c2;white-space:nowrap;line-height:16px}
.no{text-align:center;background:linear-gradient(#fafafa,#ededed)}
.nm{padding-left:20px !important}
.val{padding-left:2px !important}
.cur .no{background:#fdd79a;color:#8a1010}
.cur .nm{background:#0078d7;color:#fff}
.cur .val{background:#d8e8f8}
.dis .nm,.dis .val{color:#888}
.link{color:#0000e0}
.grey{color:#888}
.plus{display:inline-block;width:13px;height:13px;border:1px solid #888;color:#111;text-align:center;line-height:10px;margin:0 5px 0 -18px;vertical-align:-2px;font:12px/10px "Liberation Sans",sans-serif}

.status{height:20px;flex:none;display:grid;grid-template-columns:148px 78px 98px 48px 914px 70px;gap:2px;background:#fff}
.status span{background:#f0f0f0;border:1px solid #e2e2e2;padding-left:2px;white-space:nowrap;line-height:18px}

.taskbar{height:40px;flex:none;display:flex;background:#06141b;color:#fff}
.start{width:48px;background:#000;display:flex;align-items:center;justify-content:center}
.tsearch{width:344px;background:#333;display:flex;align-items:center;padding-left:12px;gap:7px}
.cortana{width:17px;height:17px;border:2.500px solid #ddd;border-radius:50%;flex:none}
.tsearch-text{color:#8a8a8a;font-size:14px;white-space:nowrap}
.mic{margin-left:auto;margin-right:15px}
.tasks{flex:1;display:grid;padding-left:12px;
grid-template-columns:50px 52px 48px 55px 49px 49px 49px 48px 48px 48px 49px 42px 68px 23px 25px 23px 22px 35px 27px 26px 85px 41px}
.tc{position:relative;height:40px;display:flex;align-items:center}
.ce{color:#dde3e6}.edge{color:#0f78d4}.ie{color:#2f9be8}
.run::after{content:"";position:absolute;left:-8px;width:40px;bottom:0;height:2px;background:#6aa8e8}
.cur-app::before{content:"";position:absolute;left:-11px;width:47px;top:0;bottom:0;background:#3c474d}
.cur-app svg{position:relative}
.tray-text{display:flex;align-items:center;height:40px;font-size:12px;color:#e6e6e6}
.zh{font-size:14px;color:#fff;padding-left:0}
.tray-cpu,.clock{display:flex;flex-direction:column;align-items:center;justify-content:center;gap:5px;line-height:14px;font-size:12px;color:#e6e6e6;width:50px}
.clock{width:72px;font-size:13px;gap:6px}

.ball{position:absolute;left:964px;top:-30px;width:44px;height:47px;border-radius:50%;background:radial-gradient(circle at 50% 70%,#5dc95d,#2f9e3f);border:2px solid #d5dcd5;box-shadow:0 2px 5px rgba(0,0,0,.4);color:#fff;font-size:12px;display:flex;align-items:flex-end;justify-content:center;padding-bottom:1px}
.ime{position:absolute;left:703px;top:0;display:flex;align-items:flex-start}
.ime-logo{flex:none;position:relative;z-index:1}
.ime-bar{margin-left:-1px;margin-top:3px;width:179px;height:24px;background:#f5f8fc;border:1px solid #b6cbdf;display:grid;align-items:center;grid-template-columns:21px 22px 23px 20px 23px 22px 21px 15px;padding-left:7px;color:#1a6fc4}
.ime-bar b{font-size:14px;line-height:1}

.dialog{position:absolute;left:701px;top:88px;width:615px;height:543px;border:1px solid #39464c;background:#b9d1ea;padding:0 7px 8px;display:flex;flex-direction:column;box-shadow:0 0 6px rgba(0,0,0,.35)}
.dlg-title{height:30px;flex:none;margin:0 -7px;padding:11px 0 0 8px;background:linear-gradient(#98b3d0,#b9d1ea);color:#222}
.dlg-radios{height:34px;flex:none;background:#f0f0f0;display:flex;align-items:center;padding-left:93px;border-bottom:1px solid #ccc}
.rad{display:flex;align-items:center;gap:3px;width:246px;white-space:nowrap}
.dot{width:13px;height:13px;border:1px solid #555;border-radius:50%;background:#fff;flex:none;display:flex;align-items:center;justify-content:center}
.dot.on{background:#eee;box-shadow:inset 0 0 0 2px #ddd}
.dot.on::before{content:"";width:7px;height:7px;border-radius:50%;background:#333}
.cad{display:block;flex:none}
.dlg-foot{height:44px;flex:none;background:#f0f0f0;display:flex;align-items:center;justify-content:flex-end;padding:0 27px 6px 0;border-bottom:1px solid #aaa}
.dlg-btn{width:72px;height:22px;background:#e6e6e6;border:1px solid #adadad}

/* CAD drawing */
.w{fill:none;stroke:#fff;stroke-width:1}
.mg{fill:none;stroke:#f0f;stroke-width:2}
.yl{fill:none;stroke:#ff0;stroke-width:2}
.rd{fill:none;stroke:#f00;stroke-width:2}
.gn-d{fill:#0f0}.yl-d{fill:#ff0}.cy-d{fill:#0ff}
.tw{fill:#fff;font:15px "Noto Sans CJK SC",sans-serif}
.tg{fill:#0f0;font:16px "Liberation Mono",monospace;letter-spacing:-1.200px}
.tg.g2{font-size:18px;letter-spacing:-2px}
.tg.n{font-size:16px}
.tilt{font-size:16px;letter-spacing:1px;stroke:#8ab8ff;stroke-width:.2px}
.ts{fill:#fff;font:42px "Liberation Serif",serif}
.ts.s1{font-size:40px}
.big{fill:#fff;font:32px "Noto Sans CJK SC",sans-serif;letter-spacing:1.300px}
.mark{fill:none;stroke:#f00;stroke-width:6;stroke-linecap:round}
.mark-h{fill:#f00;stroke:#f00;stroke-width:4;stroke-linejoin:round}
```
